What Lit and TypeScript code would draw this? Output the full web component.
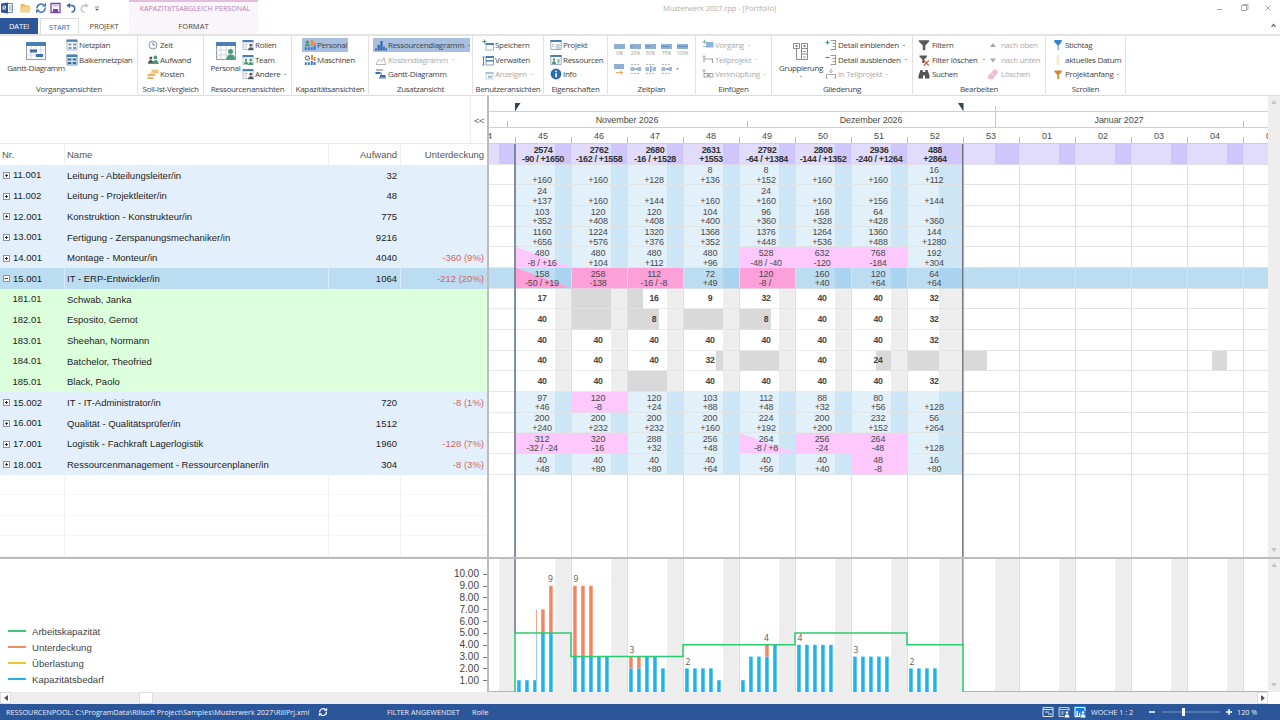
import {LitElement, html, svg, css, nothing} from 'lit';
import {customElement, property} from 'lit/decorators.js';
import {classMap} from 'lit/directives/class-map.js';
import {styleMap} from 'lit/directives/style-map.js';

const WEEK = 56;
const LEAD = 26;
const BLUE = '#4a80b4';

/* icons on a 12x12 canvas */
const ICONS: Record<string, unknown> = {
  netz: svg`<path d="M1 1h10v10H1z" fill="#fff" stroke="#8fa8c0" stroke-width=".8"/><path d="M.6.6h10.8v2.2H.6z" fill=${BLUE}/><path d="M2.5 4.5h3v2h-3zM7 4.5h3v2H7zM2.5 8h3v2h-3zM7 8h3v2H7z" fill="#6c9ac6"/>`,
  balken: svg`<path d="M1 1h10v10H1z" fill="#dce8f3" stroke="#5f87ad" stroke-width=".8"/><path d="M.6.6h10.8v2.4H.6z" fill=${BLUE}/><path d="M2 4.5h3.4v2H2zM6.6 4.5H10v2H6.6zM2 8h3.4v2H2zM6.6 8H10v2H6.6z" fill="#39699c"/>`,
  zeit: svg`<circle cx="6" cy="6" r="4" fill="#f4f8fc" stroke="#7f93a8" stroke-width=".9"/><path d="M6 3.5V6h2" fill="none" stroke="#4f6f90" stroke-width=".8"/>`,
  aufwand: svg`<circle cx="3.8" cy="4" r="1.5" fill="#555"/><path d="M1 9.8c0-5 5.5-5 5.5 0z" fill="#555"/><circle cx="8.4" cy="3.4" r="1.9" fill="#4b9a78"/><path d="M5.3 10c0-5.5 6.4-5.5 6.4 0z" fill="#4b9a78"/>`,
  kosten: svg`<path d="M4.5 1.5h7v4h-7z" fill="#f3c27c"/><path d="M.5 6h7.5v2H.5zM.5 9h6v2H.5z" fill="#efb267"/><path d="M3 4h3v2H3z" fill="#f9dcae"/>`,
  rollen: svg`<path d="M1 1.5h10v9H1z" fill="#fff" stroke="#9aa9b8" stroke-width=".7"/><path d="M.6 1h10.8v2.2H.6z" fill=${BLUE}/><path d="M1 5.5h5M1 8h4M4 3v7" stroke="#b4bfca" stroke-width=".6"/><circle cx="8.8" cy="6.2" r="1.4" fill="#555"/><path d="M6 11.2c0-4 5.6-4 5.6 0z" fill="#555"/>`,
  team: svg`<path d="M1 1.5h10v9H1z" fill="#fff" stroke="#9aa9b8" stroke-width=".7"/><path d="M.6 1h10.8v2.2H.6z" fill=${BLUE}/><circle cx="4" cy="6" r="1.2" fill="#4b9a78"/><path d="M2 10c0-3.6 4-3.6 4 0z" fill="#4b9a78"/><circle cx="8.6" cy="6" r="1.4" fill="#4b9a78"/><path d="M6.2 11c0-4 5-4 5 0z" fill="#4b9a78"/>`,
  personal: svg`<circle cx="3.4" cy="3.2" r="1.7" fill="#4b9a78"/><path d="M.8 7.2c0-3.6 5.2-3.6 5.2 0z" fill="#4b9a78"/><path d="M7 1h2v6H7zM9.6 3h2v4h-2z" fill="#e98a3e"/><path d="M.8 8.2h2V11h-2zM3.8 8.2h2V11h-2zM6.8 8.2h2V11h-2zM9.6 6.5h2V11h-2z" fill="#3b78c4"/>`,
  maschinen: svg`<circle cx="3.4" cy="4" r="2" fill="none" stroke="#555" stroke-width="1.4" stroke-dasharray="1.2 .6"/><path d="M7 1h2v5H7zM9.6 3h2v4h-2z" fill="#e98a3e"/><path d="M.8 8.2h2V11h-2zM3.8 8.2h2V11h-2zM6.8 7h2v4h-2zM9.6 8h2v3h-2z" fill="#3b78c4"/>`,
  diagramm: svg`<path d="M0 11.5v-2h2v2zM2.6 11.5V6h2.2v5.5zM5.4 11.5V2h2.2v9.5zM8.2 11.5v-4h1.6v4zM10.4 11.5v-2H12v2z" fill="#2f66ad"/>`,
  kostendia: svg`<path d="M1 10l3-5 2.5 3L9 3.5M9 4l1.5 6M1 10.5h10" fill="none" stroke="#b9b9b9" stroke-width="1"/>`,
  gantt: svg`<path d="M1 2h7M4 9.8h7" stroke="#777" stroke-width="1.2"/><path d="M.5 4h5v2h-5zM5 7h5.5v2H5z" fill="#2f6fb4"/><path d="M5.5 5h1v2" fill="none" stroke="#666" stroke-width=".7"/>`,
  speichern: svg`<path d="M2.5.5v4M.5 2.5h4" stroke="#4b9a78" stroke-width="1.2"/><path d="M4 4.5h7.5V11H4z" fill="#fff" stroke="#8ba2ba" stroke-width=".8"/><path d="M3.6 4h8.3v2H3.6z" fill=${BLUE}/>`,
  verwalten: svg`<path d="M1.5 3v8M.5 3h2M.5 11h2" stroke="#555" stroke-width=".8"/><path d="M4 2.5h7.5V11H4z" fill="#fff" stroke="#6b8caf" stroke-width=".8"/><path d="M3.6 2h8.3v2H3.6zM4 6h7.5v1.5H4z" fill=${BLUE}/>`,
  anzeigen: svg`<path d="M4 4.5h7V11H4z" fill="#fff" stroke="#bccad8" stroke-width=".8"/><path d="M3.6 4h7.8v2H3.6zM6 7.5h4V10H6z" fill="#a9c3dd"/>`,
  projekt: svg`<path d="M.8 1.5h10.4v9H.8z" fill="#fff" stroke="#8797a8" stroke-width=".8"/><path d="M.4 1h11.2v2H.4z" fill=${BLUE}/><path d="M5.5 5h5v5h-5z" fill="#c9d3de"/><path d="M2 5.5h2M2 7.5h2" stroke="#888" stroke-width=".6"/>`,
  ressourcen: svg`<path d="M.8 1.5h10.4v9H.8z" fill="#fff" stroke="#8797a8" stroke-width=".8"/><path d="M.4 1h11.2v2H.4z" fill=${BLUE}/><circle cx="4" cy="5.5" r="1.2" fill="#4b9a78"/><path d="M2 10c0-4 4-4 4 0z" fill="#4b9a78"/><path d="M7.5 5h2v4.5h-2z" fill="#7db89d"/>`,
  info: svg`<circle cx="6" cy="6" r="5.4" fill="#2a6cb0"/><path d="M5.3 5.2h1.6v4H5.3z" fill="#fff"/><circle cx="6.1" cy="3.4" r=".9" fill="#fff"/>`,
  vorgang: svg`<path d="M2.5.8v4M.5 2.8h4" stroke="#8fb8a6" stroke-width="1.2"/><path d="M4 3h7.5v5.5H4z" fill="#8fb4dc"/><path d="M1 7.5h3" stroke="#a6b8ca"/>`,
  teilprojekt: svg`<path d="M2 .8v4M.3 2.8h3.4" stroke="#9cbfb0" stroke-width="1"/><path d="M2 8V5h8.5v4" fill="none" stroke="#9f9f9f" stroke-width="1.2"/>`,
  verknuepf: svg`<path d="M2 .8v4M.3 2.8h3.4" stroke="#9cbfb0" stroke-width="1"/><path d="M2 5.500h4V9H2zM7 5.500h4V9H7zM4.500 7.200h4" fill="none" stroke="#9f9f9f" stroke-width="1"/>`,
  einblenden: svg`<path d="M2.5 1.5v4M.5 3.5h4" stroke="#3d9468" stroke-width="1.2"/><path d="M5.5 1.5h5M7.5 4.500h3M7.5 7.500h3M5.500 10.500h5M10.500 1v10" fill="none" stroke="#8d8d8d" stroke-width=".9"/>`,
  ausblenden: svg`<path d="M.5 3.5h4" stroke="#d4593a" stroke-width="1.2"/><path d="M5.5 1.5h5M7.500 4.500h3M7.500 7.500h3M5.500 10.500h5M10.500 1v10" fill="none" stroke="#8d8d8d" stroke-width=".9"/>`,
  inteil: svg`<path d="M6 .5v4M4.3 3L6 4.8 7.7 3M1.5 10V6.5h9V10M.5 10H3M9 10h2.5" fill="none" stroke="#a9a9a9" stroke-width="1"/>`,
  filter: svg`<path d="M.8 1.2h10.4v1.4L7.3 6.5v4.8H4.8V6.5L.8 2.6z" fill="#5a5a5a"/>`,
  filterx: svg`<path d="M1.500 1.500H9v1.200L6.300 5.500V9h-2V5.500L1.500 2.700z" fill="#5a5a5a"/><path d="M5.800 6.500l5 5M10.800 6.500l-5 5" stroke="#d4593a" stroke-width="1.1"/>`,
  suchen: svg`<path d="M2.5 2h2.200v2h2.600V2h2.200l2 5.500v3H7v-3H5v3H.5v-3z" fill="#555"/>`,
  oben: svg`<path d="M3 8l3-4 3 4z" fill="#a8a8a8"/>`,
  unten: svg`<path d="M3 4.500l3 4 3-4z" fill="#a8a8a8"/>`,
  loeschen: svg`<path d="M7.500 1l4 3L5.500 11.500 1 10.500.8 8z" fill="#efbccb"/><path d="M4 4.500l4 4" stroke="#fff" stroke-width=".6"/>`,
  stichtag: svg`<path d="M2.300 1h7.400v2L6.600 6.500V11h-.9V6.500L2.300 3z" fill="#2f87d6"/>`,
  datum: svg`<path d="M4.500 1h3v10h-3z" fill="#eef0cf"/>`,
  anfang: svg`<path d="M2.500 2.500h7.200V4L7 6.800V11H5.400V6.800L2.500 4z" fill="#dd8128"/>`,
};

const BIG: Record<string, unknown> = {
  gantt: svg`<path d="M.5.5h19v17H.5z" fill="#fff" stroke="#8e9aa6"/><path d="M0 0h20v4H0z" fill=${BLUE}/><path d="M0 8h20M0 13h20M5 4v14M10 4v14M15 4v14" stroke="#c2cad2" stroke-width=".7"/><path d="M4 7.500h7v3H4zM10 12h7v3h-7z" fill="#3b70aa"/>`,
  personal: svg`<path d="M.5.5h19v17H.5z" fill="#fff" stroke="#8e9aa6"/><path d="M0 0h20v4H0z" fill=${BLUE}/><path d="M0 8h20M0 13h20M5 4v14M10 4v14M15 4v14" stroke="#c2cad2" stroke-width=".7"/><circle cx="14.5" cy="9.5" r="2.5" fill="#4b9a78"/><path d="M10 18.500c0-8 9.500-8 9.500 0z" fill="#4b9a78"/>`,
  gruppe: svg`<path d="M2.500 1.500h6v5h-6zM10.500 1.500h6v16h-6zM10.500 6.500h6M10.500 12h6M5.500 6.500v11h5" fill="none" stroke="#8d8d8d"/><path d="M4 4h3M5.500 2.700v2.600M12 4h3M13.500 2.700v2.600M12 9.500h3M12 15h3" stroke="#777" stroke-width=".8"/>`,
};

type Item = {icon: string; text: string; arrow?: boolean; off?: boolean; on?: number};
type Col = {x: number; w: number; gap?: number; items: Item[]};
type Group = {w: number; caption: string; big?: {w: number; icon: string; text: string; arrow?: boolean}; cols: Col[]; plan?: boolean};

const GROUPS: Group[] = [
  {w: 137, caption: 'Vorgangsansichten', big: {w: 62, icon: 'gantt', text: 'Gantt-Diagramm'}, cols: [
    {x: 3, w: 70, items: [{icon: 'netz', text: 'Netzplan'}, {icon: 'balken', text: 'Balkennetzplan'}]}]},
  {w: 66, caption: 'Soll-Ist-Vergleich', cols: [
    {x: 9, w: 50, items: [{icon: 'zeit', text: 'Zeit'}, {icon: 'aufwand', text: 'Aufwand'}, {icon: 'kosten', text: 'Kosten'}]}]},
  {w: 88, caption: 'Ressourcenansichten', big: {w: 34, icon: 'personal', text: 'Personal'}, cols: [
    {x: 4, w: 48, items: [{icon: 'rollen', text: 'Rollen'}, {icon: 'team', text: 'Team'}, {icon: 'rollen', text: 'Andere', arrow: true}]}]},
  {w: 77, caption: 'Kapazitätsansichten', cols: [
    {x: 12, w: 60, items: [{icon: 'personal', text: 'Personal', on: 46}, {icon: 'maschinen', text: 'Maschinen'}]}]},
  {w: 104, caption: 'Zusatzansicht', cols: [
    {x: 6, w: 97, items: [{icon: 'diagramm', text: 'Ressourcendiagramm', arrow: true, on: 97}, {icon: 'kostendia', text: 'Kostendiagramm', arrow: true, off: true}, {icon: 'gantt', text: 'Gantt-Diagramm'}]}]},
  {w: 71, caption: 'Benutzeransichten', cols: [
    {x: 9, w: 60, items: [{icon: 'speichern', text: 'Speichern'}, {icon: 'verwalten', text: 'Verwalten'}, {icon: 'anzeigen', text: 'Anzeigen', arrow: true, off: true}]}]},
  {w: 64, caption: 'Eigenschaften', cols: [
    {x: 6, w: 57, items: [{icon: 'projekt', text: 'Projekt'}, {icon: 'ressourcen', text: 'Ressourcen'}, {icon: 'info', text: 'Info'}]}]},
  {w: 88, caption: 'Zeitplan', cols: [], plan: true},
  {w: 76, caption: 'Einfügen', cols: [
    {x: 6, w: 69, items: [{icon: 'vorgang', text: 'Vorgang', arrow: true, off: true}, {icon: 'teilprojekt', text: 'Teilprojekt', arrow: true, off: true}, {icon: 'verknuepf', text: 'Verknüpfung', arrow: true, off: true}]}]},
  {w: 141, caption: 'Gliederung', big: {w: 50, icon: 'gruppe', text: 'Gruppierung', arrow: true}, cols: [
    {x: 3, w: 86, items: [{icon: 'einblenden', text: 'Detail einblenden', arrow: true}, {icon: 'ausblenden', text: 'Detail ausblenden', arrow: true}, {icon: 'inteil', text: 'in Teilprojekt', arrow: true, off: true}]}]},
  {w: 133, caption: 'Bearbeiten', cols: [
    {x: 5, w: 69, gap: 2, items: [{icon: 'filter', text: 'Filtern'}, {icon: 'filterx', text: 'Filter löschen', arrow: true}, {icon: 'suchen', text: 'Suchen'}]},
    {x: 0, w: 56, gap: 2, items: [{icon: 'oben', text: 'nach oben', off: true}, {icon: 'unten', text: 'nach unten', off: true}, {icon: 'loeschen', text: 'Löschen', off: true}]}]},
  {w: 80, caption: 'Scrollen', cols: [
    {x: 6, w: 70, items: [{icon: 'stichtag', text: 'Stichtag'}, {icon: 'datum', text: 'aktuelles Datum'}, {icon: 'anfang', text: 'Projektanfang', arrow: true}]}]},
];

@customElement('rp-ribbon')
export class Ribbon extends LitElement {
  static styles = css`
    :host {
      display: flex;
      height: 59px;
      padding-left: 1px;
      border-top: 2px solid #e4e4e4;
      border-bottom: 1px solid #dcdcdc;
      font: 8px/14.5px 'Open Sans', 'Noto Sans', sans-serif;
      color: #444;
      box-sizing: content-box;
    }
    .group {
      box-sizing: border-box;
      border-right: 1px solid #e2e2e2;
      height: 58px;
      flex: none;
    }
    .body {
      display: flex;
      height: 45px;
      padding-top: 2px;
      box-sizing: border-box;
    }
    .caption {
      display: flex;
      justify-content: center;
      line-height: 15px;
      white-space: nowrap;
      letter-spacing: -0.3px;
    }
    .col {
      box-sizing: border-box;
      flex: none;
    }
    .item {
      display: flex;
      align-items: center;
      height: 14.6px;
      white-space: nowrap;
      letter-spacing: -0.29px;
      gap: 1px;
    }
    .item.wide {
      gap: 2px;
    }
    .item.on {
      background: #a9bfe0;
      margin-left: -2px;
      padding-left: 2px;
      height: 14px;
      margin-bottom: 0.6px;
      box-sizing: border-box;
    }
    .off {
      color: #aaa;
    }
    .item svg {
      flex: none;
    }
    .arrow {
      border: 1.7px solid transparent;
      border-top-color: currentColor;
      border-bottom: 0;
      margin-left: 3px;
      height: 0;
    }
    .big {
      display: flex;
      flex-direction: column;
      align-items: center;
      padding: 4px 0 0 8px;
      flex: none;
      white-space: nowrap;
      letter-spacing: -0.35px;
      box-sizing: border-box;
    }
    .big.slim {
      padding-left: 9px;
    }
    .big span {
      line-height: 15px;
    }
    .big .arrow {
      margin: 1px 0 0;
    }
    .plan {
      display: grid;
      grid-template-columns: repeat(5, 15.7px);
      padding: 5px 0 0 5px;
      grid-auto-rows: 20px;
    }
  `;

  renderPlan() {
    const bar = (label: string, i: number) => html`
      <svg width="14" height="18" viewBox="0 0 14 18">
        <rect x="1" y="1" width="11" height="5" fill="#8eb0d2"></rect>
        <rect x="1" y="3" width=${i * 2.75} height="1" fill="#5f8fc0"></rect>
        <text x="6.5" y="12" font-size="4.8" text-anchor="middle" fill="#999">${label}</text>
      </svg>`;
    const split = (n: number) => html`
      <svg width="14" height="14" viewBox="0 0 14 14">
        ${n === 0
          ? svg`<path d="M1 1h10v5H1z" fill="#8eb0d2"/><path d="M3 9.500h7M8 7.500v4" stroke="#e9a871" stroke-width="1.2"/>`
          : svg`<path d="M1.500 4H5v4H1.500zM8.500 4H12v4H8.500z" fill="#9dbbd9"/><path d="M2 1.500h9M2 10.500h9" stroke="#b5b5b5" stroke-dasharray="2 1"/><path d=${n === 2 ? 'M6.8 3v6' : 'M5 6h4'} stroke="#7ea5cc" stroke-width="1.5"/>`}
      </svg>`;
    return html`<div class="plan">
      ${['0%', '25%', '50%', '75%', '100%'].map(bar)}
      ${[0, 1, 2, 3].map(split)}
      <svg width="6" height="12"><path d="M0 5h3l-1.5 2z" fill="#999"></path></svg>
    </div>`;
  }

  renderItem(item: Item, col: Col) {
    const on = item.on !== undefined;
    return html`<div class=${classMap({item: true, on, off: !!item.off, wide: !!col.gap})}
      style=${on ? styleMap({width: item.on + 'px'}) : nothing}>
      <svg width="12" height="12" viewBox="0 0 12 12">${ICONS[item.icon]}</svg>
      <span>${item.text}</span>${item.arrow ? html`<i class="arrow"></i>` : nothing}
    </div>`;
  }

  render() {
    return GROUPS.map((g) => html`
      <div class="group" style=${styleMap({width: g.w + 'px'})}>
        <div class="body">
          ${g.big ? html`<div class=${classMap({big: true, slim: g.big.w < 40})} style=${styleMap({width: g.big.w + 'px'})}>
            <svg width="20" height="18" viewBox="0 0 20 18">${BIG[g.big.icon]}</svg>
            <span>${g.big.text}</span>${g.big.arrow ? html`<i class="arrow"></i>` : nothing}
          </div>` : nothing}
          ${g.cols.map((c) => html`<div class="col" style=${styleMap({width: c.w + c.x + 'px', paddingLeft: c.x + 'px'})}>
            ${c.items.map((i) => this.renderItem(i, c))}
          </div>`)}
          ${g.plan ? this.renderPlan() : nothing}
        </div>
        <div class="caption">${g.caption}</div>
      </div>`);
  }
}

/* cell: "top|bottom", prefix "!" = shortage, "/" = partly short */
type Row = {nr: string; name: string; effort?: string; short?: string; kind: 'role' | 'sel' | 'person'; cells: string[]; off?: Record<number, [number, number]>};

const ROWS: Row[] = [
  {nr: '11.001', name: 'Leitung - Abteilungsleiter/in', effort: '32', kind: 'role', cells: ['|+160', '|+160', '|+128', '8|+136', '8|+152', '|+160', '|+160', '16|+112']},
  {nr: '11.002', name: 'Leitung - Projektleiter/in', effort: '48', kind: 'role', cells: ['24|+137', '|+160', '|+144', '|+160', '24|+160', '|+160', '|+156', '|+144']},
  {nr: '12.001', name: 'Konstruktion - Konstrukteur/in', effort: '775', kind: 'role', cells: ['103|+352', '120|+408', '120|+408', '104|+400', '96|+360', '168|+328', '64|+428', '|+360']},
  {nr: '13.001', name: 'Fertigung - Zerspanungsmechaniker/in', effort: '9216', kind: 'role', cells: ['1160|+656', '1224|+576', '1320|+376', '1368|+352', '1376|+448', '1264|+536', '1360|+488', '144|+1280']},
  {nr: '14.001', name: 'Montage - Monteur/in', effort: '4040', short: '-360 (9%)', kind: 'role', cells: ['/480|-8 / +16', '480|+104', '480|+112', '480|+96', '!528|-48 / -40', '!632|-120', '!768|-184', '192|+304']},
  {nr: '15.001', name: 'IT - ERP-Entwickler/in', effort: '1064', short: '-212 (20%)', kind: 'sel', cells: ['/158|-50 / +19', '!258|-138', '!112|-16 / -8', '72|+49', '!120|-8 / ', '160|+40', '120|+64', '64|+64']},
  {nr: '181.01', name: 'Schwab, Janka', kind: 'person', cells: ['17', '', '16', '9', '32', '40', '40', '32'], off: {1: [0, 40], 2: [0, 16]}},
  {nr: '182.01', name: 'Esposito, Gernot', kind: 'person', cells: ['40', '', '8', '', '8', '40', '40', '32'], off: {1: [0, 40], 2: [0, 32], 3: [0, 40], 4: [0, 32]}},
  {nr: '183.01', name: 'Sheehan, Normann', kind: 'person', cells: ['40', '40', '40', '40', '40', '40', '40', '32']},
  {nr: '184.01', name: 'Batchelor, Theofried', kind: 'person', cells: ['40', '40', '40', '32', '', '40', '24', ''], off: {3: [32, 40], 4: [0, 40], 6: [24, 40], 7: [0, 32], 8: [0, 24], 12: [24, 40]}},
  {nr: '185.01', name: 'Black, Paolo', kind: 'person', cells: ['40', '40', '', '40', '40', '40', '40', '32'], off: {2: [0, 40]}},
  {nr: '15.002', name: 'IT - IT-Administrator/in', effort: '720', short: '-8 (1%)', kind: 'role', cells: ['97|+46', '!120|-8', '120|+24', '103|+88', '112|+48', '88|+32', '80|+56', '|+128']},
  {nr: '16.001', name: 'Qualität - Qualitätsprüfer/in', effort: '1512', kind: 'role', cells: ['200|+240', '200|+232', '200|+232', '200|+160', '224|+192', '200|+200', '232|+152', '56|+264']},
  {nr: '17.001', name: 'Logistik - Fachkraft Lagerlogistik', effort: '1960', short: '-128 (7%)', kind: 'role', cells: ['!312|-32 / -24', '!320|-16', '288|+32', '256|+48', '/264|-8 / +8', '!256|-24', '!264|-48', '|+128']},
  {nr: '18.001', name: 'Ressourcenmanagement - Ressourcenplaner/in', effort: '304', short: '-8 (3%)', kind: 'role', cells: ['40|+48', '40|+80', '40|+80', '40|+64', '40|+56', '40|+40', '!48|-8', '16|+80']},
];

const TOTALS = ['2574|-90 / +1650', '2762|-162 / +1558', '2680|-16 / +1528', '2631|+1553', '2792|-64 / +1384', '2808|-144 / +1352', '2936|-240 / +1264', '488|+2864'];
const WEEKS = ['45', '46', '47', '48', '49', '50', '51', '52', '53', '01', '02', '03', '04', '05'];
/* working span of a week in px, shorter around the holidays */
const work = (i: number) => (i === 7 || i === 8 ? 32 : 40);

@customElement('rp-table')
export class Table extends LitElement {
  static styles = css`
    :host {
      display: flex;
      flex-direction: column;
      font: 9.5px 'Liberation Sans', Arial, sans-serif;
      color: #222;
      overflow: hidden;
    }
    .top {
      height: 48px;
      display: flex;
      justify-content: flex-end;
      border-bottom: 1px solid #e8e8e8;
      box-sizing: border-box;
      flex: none;
    }
    .fold {
      width: 16px;
      border-left: 1px solid #eee;
      line-height: 49px;
      text-align: center;
      color: #666;
      letter-spacing: -0.5px;
    }
    .row {
      display: grid;
      grid-template-columns: 64px 264px 72px 1fr;
      height: 20.667px;
      line-height: 21px;
      flex: none;
      white-space: nowrap;
    }
    .row > * {
      padding: 0 3px 0 2px;
      border-left: 1px solid transparent;
      overflow: hidden;
    }
    .row > :first-child {
      border-left: 0;
    }
    .row > :nth-child(n + 3) {
      text-align: right;
    }
    .row > :last-child {
      color: #d9655c;
    }
    .head > *, .head > :last-child {
      color: #555;
      border-left-color: #eee;
    }
    .role {
      background: #e3f0fb;
    }
    .sel {
      background: #bcdcf1;
    }
    .sel > * {
      border-left-color: #d8ebf7;
    }
    .person {
      background: #dcffdc;
    }
    .empty {
      box-shadow: inset 0 -1px #f5f5f5;
    }
    .empty > * {
      border-left-color: #f1f1f1;
    }
    .row .nr {
      display: flex;
      align-items: center;
      gap: 3px;
      padding-left: 3px;
    }
    .nr svg {
      margin-top: 1px;
    }
    .row.person .nr {
      padding-left: 12.5px;
    }
  `;

  render() {
    return html`
      <div class="top"><div class="fold">&lt;&lt;</div></div>
      <div class="row head"><span>Nr.</span><span>Name</span><span>Aufwand</span><span>Unterdeckung</span></div>
      ${ROWS.map((r) => html`<div class="row ${r.kind}">
        <span class="nr">${r.kind === 'person' ? nothing : html`
          <svg width="7" height="7" viewBox="0 0 7 7"><rect x=".5" y=".5" width="6" height="6" fill="#fff" stroke="#8a949c"></rect>
          <path d=${r.kind === 'sel' ? 'M2 3.5h3' : 'M2 3.5h3M3.5 2v3'} stroke="#333"></path></svg>`}${r.nr}</span>
        <span>${r.name}</span><span>${r.effort}</span><span>${r.short}</span>
      </div>`)}
      ${[0, 1, 2, 3].map(() => html`<div class="row empty"><span></span><span></span><span></span><span></span></div>`)}
    `;
  }
}

@customElement('rp-timeline')
export class Timeline extends LitElement {
  static styles = css`
    :host {
      display: flex;
      flex-direction: column;
      position: relative;
      overflow: hidden;
      font: 9px/9.5px 'Liberation Sans', Arial, sans-serif;
      color: #4a4a4a;
      --line: #dfdfdf;
    }
    .band {
      display: flex;
      height: 16px;
      box-sizing: border-box;
      border-bottom: 1px solid #d0d0d0;
      line-height: 16px;
      flex: none;
      overflow: hidden;
    }
    .band > * {
      flex: none;
      text-align: center;
      background: linear-gradient(#bbb, #bbb) left bottom / 1px 6px no-repeat;
      letter-spacing: -0.1px;
    }
    .band > .cut {
      display: flex;
      justify-content: flex-end;
      background: none;
      overflow: hidden;
    }
    .cut span {
      width: 56px;
      flex: none;
    }
    .row {
      display: flex;
      height: 20.667px;
      flex: none;
      overflow: hidden;
      box-shadow: inset 0 -1px #e6e6e6;
    }
    .lead {
      width: 26px;
      flex: none;
    }
    .cell {
      width: 56px;
      flex: none;
      box-sizing: border-box;
      border-left: 1px solid var(--line);
      border-bottom: 1px solid rgba(225, 225, 225, 0.7);
      text-align: center;
      white-space: pre;
      letter-spacing: -0.22px;
      padding: 1.8px 3px 0 0;
      background: linear-gradient(to right, var(--base) calc(var(--work) - 1px), var(--rest) 0);
    }
    .plain {
      --base: transparent;
      --rest: transparent;
    }
    .role {
      --base: #e2f0fa;
      --rest: #cde6f5;
    }
    .sel {
      --base: #bcddf1;
      --rest: #a9d3ee;
    }
    .row.sel {
      background: #bcdcf1;
    }
    .row.sel .plain {
      background: none;
    }
    .person {
      --base: #fff;
      --rest: #eee;
    }
    .person .cell {
      line-height: 17.5px;
      color: #444;
      font-weight: bold;
      font-size: 8.7px;
    }
    .person .cell.off {
      background: linear-gradient(to right, transparent var(--a), #d9d9d9 var(--a), #d9d9d9 var(--b), transparent 0),
        linear-gradient(to right, var(--base) calc(var(--work) - 1px), var(--rest) 0);
    }
    .cell.short {
      background: #fdc8fb;
    }
    .cell.part {
      background: linear-gradient(to top right, #fdc8fb 50%, transparent 50.5%),
        linear-gradient(to right, var(--base) calc(var(--work) - 1px), var(--rest) 0);
    }
    .sel .cell.short {
      background: #fd9fd8;
    }
    .sel .cell.part {
      background: linear-gradient(to top right, #fd9fd8 50%, transparent 50.5%),
        linear-gradient(to right, var(--base) calc(var(--work) - 1px), var(--rest) 0);
    }
    .total {
      --base: #e1dcfb;
      --rest: #cfc7fc;
      color: #333;
      background: linear-gradient(to right, #e1dcfb 10px, #cfc7fc 10px, #cfc7fc 26px, #e1dcfb 0);
    }
    .total .cell {
      font-weight: bold;
      letter-spacing: -0.35px;
      line-height: 9.7px;
      padding: 1.5px 1px 0 0;
    }
    .rest {
      display: flex;
      flex: 1;
    }
    .rest .cell {
      border-bottom: 0;
    }
    .flags {
      position: absolute;
      inset: 0;
    }
  `;

  renderCell(row: string, i: number, off?: [number, number]) {
    const short = row.startsWith('!');
    const part = row.startsWith('/');
    const [top, bottom] = (short || part ? row.slice(1) : row).split('|');
    const vars: Record<string, string> = {'--work': work(i) + 'px'};
    if (off) {
      vars['--a'] = off[0] + 'px';
      vars['--b'] = off[1] - 1 + 'px';
    }
    return html`<div class=${classMap({cell: true, short, part, off: !!off, plain: i > 7})}
      style=${styleMap(vars)}>${top}${bottom !== undefined ? html`<br>${bottom}` : nothing}</div>`;
  }

  render() {
    return html`
      <div class="band"></div>
      <div class="band">
        <span class="cut" style="width:18px"></span>
        ${([['November 2026', 240], ['Dezember 2026', 248], ['Januar 2027', 248], ['', 40]] as [string, number][]).map(([m, w]) =>
          html`<span style=${styleMap({width: w + 'px'})}>${m}</span>`)}
      </div>
      <div class="band">
        <span class="cut" style=${styleMap({width: LEAD + 'px'})}><span>44</span></span>
        ${WEEKS.map((w) => html`<span style=${styleMap({width: WEEK + 'px'})}>${w}</span>`)}
      </div>
      <div class="row total"><div class="lead"></div>
        ${WEEKS.map((_, i) => html`<div class="cell" style=${styleMap({'--work': work(i) + 'px'})}>${(TOTALS[i] ?? '').replace('|', '\n')}</div>`)}
      </div>
      ${ROWS.map((r) => html`<div class="row ${r.kind}"><div class="lead"></div>
        ${WEEKS.map((_, i) => this.renderCell(r.cells[i] ?? '', i, r.off?.[i]))}
      </div>`)}
      <div class="rest"><div class="lead"></div>${WEEKS.map(() => html`<div class="cell plain"></div>`)}</div>
      <svg class="flags" width="780" height="462">
        <path d="M26 7h5.500L26 15.500zM474.500 7H469l5.500 8.500z" fill="#33475c"></path>
        <path d="M26 48v414" stroke="#5d6f87" stroke-width="1.5"></path>
        <path d="M473.800 48v414" stroke="#5a5f68" stroke-width="1.2"></path>
        <path d="M506.500 10v22" stroke="#c8c8c8"></path>
      </svg>
    `;
  }
}

/* per week: [demand, peak] for each day, value label at [day, text] */
const LOAD: {days: [number, number][]; label: [number, string]}[] = [
  {days: [[1, 1], [1, 1], [1, 1], [5, 7], [5, 9]], label: [4, '9']},
  {days: [[3, 9], [3, 9], [3, 9], [3, 3], [3, 3]], label: [0, '9']},
  {days: [[2, 3], [2, 3], [3, 3], [3, 3], [2, 2]], label: [0, '3']},
  {days: [[2, 2], [2, 2], [2, 2], [2, 2], [1, 1]], label: [0, '2']},
  {days: [[1, 1], [3, 3], [3, 3], [3, 4], [4, 4]], label: [3, '4']},
  {days: [[4, 4], [4, 4], [4, 4], [4, 4], [4, 4]], label: [0, '4']},
  {days: [[3, 3], [3, 3], [3, 3], [3, 3], [3, 3]], label: [0, '3']},
  {days: [[2, 2], [2, 2], [2, 2], [2, 2]], label: [0, '2']},
];
const CAPACITY = [5, 3, 3, 4, 4, 5, 5, 4];
const UNIT = 11.8;
const BASE = 133;
const LEGEND = [['Arbeitskapazität', '#3cc878'], ['Unterdeckung', '#f58b68'], ['Überlastung', '#e8c92c'], ['Kapazitätsbedarf', '#1fb4ec']];

@customElement('rp-chart')
export class Chart extends LitElement {
  @property({type: Number}) width = 779;

  static styles = css`
    :host {
      display: block;
      overflow: hidden;
    }
    svg {
      display: block;
    }
    text {
      font: 8.5px 'Open Sans', 'Noto Sans', sans-serif;
      fill: #555;
      text-anchor: middle;
    }
  `;

  render() {
    const y = (v: number) => BASE - v * UNIT;
    const cap = CAPACITY.map((c, i) => `V${y(c)}H${LEAD + (i + 1) * WEEK}`).join('');
    return html`<svg width=${this.width} height="133">
      <rect x="10" y="0" width="16" height="133" fill="#eee"></rect>
      ${WEEKS.map((_, i) => svg`
        <rect x=${LEAD + i * WEEK + work(i)} y="0" width=${WEEK - work(i)} height="133" fill="#eee"/>
        <rect x=${LEAD + i * WEEK} y="0" width="1" height="133" fill="#e0e0e0"/>`)}
      <path d="M26 0V74" stroke="#8b93a5" stroke-width="2"></path>
      <path d="M473.800 0V86" stroke="#777"></path>
      ${LOAD.map((w, i) => w.days.map(([need, peak], d) => {
        const x = LEAD + i * WEEK + d * 8 + 2.2;
        return svg`
          <rect x=${x} y=${y(need)} width="3.5" height=${need * UNIT} fill="#1cb4ee"/>
          <rect x=${x} y=${y(peak)} width="3.5" height=${(peak - need) * UNIT} fill="#f58560"/>`;
      }))}
      <path d="M47.500 ${y(7)}V${y(5)}" stroke="#f5a58a"></path>
      <path d="M47.500 ${y(5)}V133" stroke="#8fd3f0"></path>
      <path d="M0 132.500H26M474 132.500H${this.width}" fill="none" stroke="#7fd3a0"></path>
      <path d="M26 133${cap}V133" fill="none" stroke="#2cc970" stroke-width="1.5"></path>
      ${LOAD.map((w, i) => svg`<text x=${LEAD + i * WEEK + w.label[0] * 8 + (w.label[0] ? 3.5 : 5)}
        y=${y(Math.max(...w.days.map((d) => d[1]))) - 3.5}>${w.label[1]}</text>`)}
    </svg>`;
  }
}

@customElement('rp-legend')
export class Legend extends LitElement {
  static styles = css`
    :host {
      display: flex;
      justify-content: space-between;
      font: 9.6px 'Liberation Sans', Arial, sans-serif;
      color: #444;
      overflow: hidden;
    }
    ul {
      list-style: none;
      margin: 0;
      padding: 64.5px 0 0 8px;
    }
    li {
      display: flex;
      align-items: center;
      gap: 6px;
      height: 16px;
    }
    svg {
      margin-top: -1px;
    }
    .axis {
      padding-top: 9.3px;
      text-align: right;
      font-size: 10px;
    }
    .axis div {
      height: 11.83px;
      line-height: 12px;
      display: flex;
      justify-content: flex-end;
      align-items: center;
      gap: 4px;
    }
    .axis i {
      width: 4px;
      height: 1px;
      background: #777;
    }
  `;

  render() {
    return html`
      <ul>${LEGEND.map(([name, color]) => html`<li>
        <svg width="18" height="2"><rect width="18" height="2" fill=${color}></rect></svg>${name}</li>`)}</ul>
      <div class="axis">${[10, 9, 8, 7, 6, 5, 4, 3, 2, 1].map((v) => html`<div>${v.toFixed(2)}<i></i></div>`)}</div>
    `;
  }
}

@customElement('app-root')
export class AppRoot extends LitElement {
  static styles = css`
    :host {
      display: flex;
      flex-direction: column;
      width: 1280px;
      height: 720px;
      background: #fff;
      font-family: 'Open Sans', 'Noto Sans', sans-serif;
      overflow: hidden;
    }
    .top {
      display: flex;
      height: 34px;
      flex: none;
    }
    .left {
      width: 129px;
    }
    .quick {
      display: flex;
      align-items: center;
      gap: 3.5px;
      height: 16px;
      padding-left: 1px;
      margin-bottom: 2px;
    }
    .tabs {
      display: flex;
      height: 16px;
      font-size: 7.5px;
      line-height: 17px;
      color: #444;
      letter-spacing: -0.15px;
      text-align: center;
    }
    .file {
      width: 38px;
      background: #2b579a;
      color: #fff;
      margin-right: 2px;
    }
    .start {
      width: 37px;
      border: 1px solid #ddd;
      border-bottom: 0;
      line-height: 16px;
      color: #2b6cb8;
    }
    .projekt {
      width: 50px;
    }
    .context {
      width: 129px;
      background: #faf5fa;
      border-top: 2px solid #e1bedd;
      box-sizing: border-box;
      padding-left: 3px;
      text-align: center;
      font-size: 7px;
      color: #b57bb0;
      line-height: 13px;
      white-space: nowrap;
      letter-spacing: 0.07px;
    }
    .format {
      color: #444;
      font-size: 7.5px;
      line-height: 23px;
      padding-right: 3px;
    }
    .title {
      flex: 1;
      padding-left: 405px;
      font-size: 7.5px;
      line-height: 17px;
      color: #b0b0b0;
      white-space: nowrap;
      letter-spacing: -0.1px;
    }
    .main {
      display: grid;
      grid-template-columns: 487px 2px 779px 12px;
      grid-template-rows: 461px 2px 133px;
      height: 596px;
      flex: none;
    }
    .split {
      background: #bcbcbc;
    }
    .across {
      grid-column: 1 / -1;
    }
    .vbar {
      background: #eee;
      display: flex;
      flex-direction: column;
      justify-content: space-between;
      align-items: center;
      padding: 4px 0;
    }
    .hbar {
      display: flex;
      height: 12px;
      background: #eee;
      flex: none;
    }
    .btn {
      width: 11px;
      background: #fff;
      display: grid;
      place-items: center;
      box-sizing: border-box;
      border: 1px solid #ddd;
    }
    .track {
      width: 128px;
    }
    .thumb {
      width: 14px;
      background: #fff;
      box-sizing: border-box;
      border: 1px solid #ddd;
    }
    .fill {
      flex: 1;
    }
    .corner {
      width: 12px;
      background: #fff;
    }
    .status {
      display: flex;
      align-items: center;
      flex: 1;
      background: #2b579a;
      color: #e8eef8;
      font-size: 7.25px;
      line-height: 16px;
      white-space: nowrap;
      padding-left: 6px;
    }
    .status svg {
      display: block;
    }
    .pool {
      width: 312px;
    }
    .sync {
      width: 69px;
    }
    .filtered {
      width: 85px;
    }
    .views {
      display: flex;
      gap: 4px;
      width: 49px;
    }
    .scale {
      width: 55px;
    }
    .slider {
      width: 91px;
    }
    .zoom {
      width: 43px;
    }
  `;

  renderQuick() {
    return html`<div class="quick">
      <svg width="12" height="12" viewBox="0 0 12 12"><path d="M5 1.5h6.5v9H5z" fill="#fff" stroke="#6d87b5"/><path d="M0 1.5L7 .5v11l-7-1z" fill="#2b579a"/><path d="M2 4v4M2 4h2.5v2H2M3.2 6l1.500 2" fill="none" stroke="#fff" stroke-width=".8"/><path d="M8 4h2.500M8 6h2.500M8 8h2.500" stroke="#6d87b5" stroke-width=".8"/></svg>
      <span></span>
      <svg width="11" height="12" viewBox="0 0 11 12"><path d="M.5 2h4l1 1.500h4V10h-9z" fill="#e9bd6b"/><path d="M2.500 5H11l-1.500 5.500h-9z" fill="#f4d28f"/></svg>
      <svg width="12" height="12" viewBox="0 0 12 12"><path d="M2 6.500A4 4 0 0 1 9 3.500M10 5.500A4 4 0 0 1 3 8.800" fill="none" stroke="#3f76b5" stroke-width="1.5"/><path d="M7 4.500h4V.8zM5 7.600H1v3.600z" fill="#3f76b5"/></svg>
      <svg width="11" height="12" viewBox="0 0 11 12"><path d="M1 1.500h9v9H1z" fill="#f8f0fa" stroke="#7b4a96" stroke-width="1.3"/><path d="M3 7h5v3.500H3z" fill="#7b4a96"/><path d="M3 2h5v2.500H3z" fill="#d8c4e2"/></svg>
      <svg width="12" height="12" viewBox="0 0 12 12"><path d="M3 3.500h3.500a3 3 0 0 1 0 6.500" fill="none" stroke="#3f68b0" stroke-width="1.5"/><path d="M1.500 3.500L5 .8v5.400z" fill="#3f68b0"/></svg>
      <svg width="10" height="12" viewBox="0 0 10 12"><path d="M7 3.500H4.500a3 3 0 0 0 0 6.500" fill="none" stroke="#b4c2d8" stroke-width="1.3"/><path d="M8.500 3.500L5.500 1v5z" fill="#b4c2d8"/></svg>
      <svg width="6" height="12" viewBox="0 0 6 12"><path d="M1 5h4" stroke="#666" stroke-width=".8"/><path d="M1 6.800h4L3 9z" fill="#666"/></svg>
    </div>`;
  }

  renderBar() {
    const tri = (d: string) => html`<svg width="6" height="5"><path d=${d} fill="#c4c4c4"></path></svg>`;
    return html`<div class="vbar">${tri('M0 4h6L3 0z')}${tri('M0 0h6L3 4z')}</div>`;
  }

  render() {
    return html`
      <div class="top">
        <div class="left">
          ${this.renderQuick()}
          <div class="tabs"><span class="file">DATEI</span><span class="start">START</span><span class="projekt">PROJEKT</span></div>
        </div>
        <div class="context">KAPAZITäTSABGLEICH PERSONAL<div class="format">FORMAT</div></div>
        <div class="title">Musterwerk 2027.rpp - [Portfolio]</div>
        <svg width="64" height="34" viewBox="0 0 64 34">
          <path d="M1 9.500h5M25.500 5.500h5v5h-5zM27 5.500v-1h5v5h-1M49.500 5.500l5 5M54.500 5.500l-5 5" fill="none" stroke="#aaa"></path>
          <path d="M55.500 27l2-2.500 2 2.500" fill="none" stroke="#555" stroke-width="1.2"></path>
        </svg>
      </div>
      <rp-ribbon></rp-ribbon>
      <div class="main">
        <rp-table></rp-table><div class="split"></div><rp-timeline></rp-timeline>${this.renderBar()}
        <div class="split across"></div>
        <rp-legend></rp-legend><div class="split"></div><rp-chart></rp-chart>${this.renderBar()}
      </div>
      <div class="hbar">
        <div class="btn"><svg width="4" height="6"><path d="M4 0v6L0 3z" fill="#555"></path></svg></div>
        <div class="track"></div><div class="thumb"></div><div class="fill"></div>
        <div class="btn"><svg width="4" height="6"><path d="M0 0v6l4-3z" fill="#555"></path></svg></div>
        <div class="corner"></div>
      </div>
      <div class="status">
        <span class="pool">RESSOURCENPOOL: C:\\ProgramData\\Rillsoft Project\\Samples\\Musterwerk 2027\\RillPrj.xml</span>
        <span class="sync"><svg width="10" height="10" viewBox="0 0 12 12"><path d="M2 6.500A4 4 0 0 1 9 3.500M10 5.500A4 4 0 0 1 3 8.800" fill="none" stroke="#fff" stroke-width="1.5"/><path d="M7 4.500h4V.8zM5 7.600H1v3.600z" fill="#fff"/></svg></span>
        <span class="filtered">FILTER ANGEWENDET</span><span>Rolle</span>
        <span class="fill"></span>
        <span class="views">
          <svg width="12" height="12" viewBox="0 0 12 12"><path d="M1 1.500h10v9H1z" fill="none" stroke="#dde6f3"/><path d="M1 3.500h10M3 6h4M6 8h4" stroke="#dde6f3" stroke-width="1.2"/></svg>
          <svg width="12" height="12" viewBox="0 0 12 12"><path d="M11 5V1.500H1v9h5M1 3.500h10M2.500 6h4M2.500 8h3" fill="none" stroke="#c4d3ea"/><circle cx="9" cy="6.5" r="1.3" fill="#fff"/><path d="M6.500 11.500c0-4.500 5-4.500 5 0z" fill="#fff"/></svg>
          <svg width="12" height="12" viewBox="0 0 12 12"><path d="M0 0h12v12H0z" fill="#1a7ae0"/><path d="M11 5V1.500H1v9h5" fill="none" stroke="#fff"/><path d="M2.500 10V5H4v5zM5 10V7h1.300v3z" fill="#fff"/><circle cx="9" cy="6.5" r="1.3" fill="#fff"/><path d="M6.500 11.500c0-4.500 5-4.500 5 0z" fill="#fff"/></svg>
        </span>
        <span class="scale">WOCHE 1 : 2</span>
        <svg class="slider" width="91" height="12" viewBox="0 0 91 12"><path d="M3 6h6M80 6h6M83 3v6" stroke="#fff" stroke-width="1.4"/><path d="M16 6h58" stroke="#8fa9d2" stroke-width=".8"/><path d="M36 2h3v8h-3z" fill="#fff"/></svg>
        <span class="zoom">120 %</span>
      </div>
    `;
  }
}
